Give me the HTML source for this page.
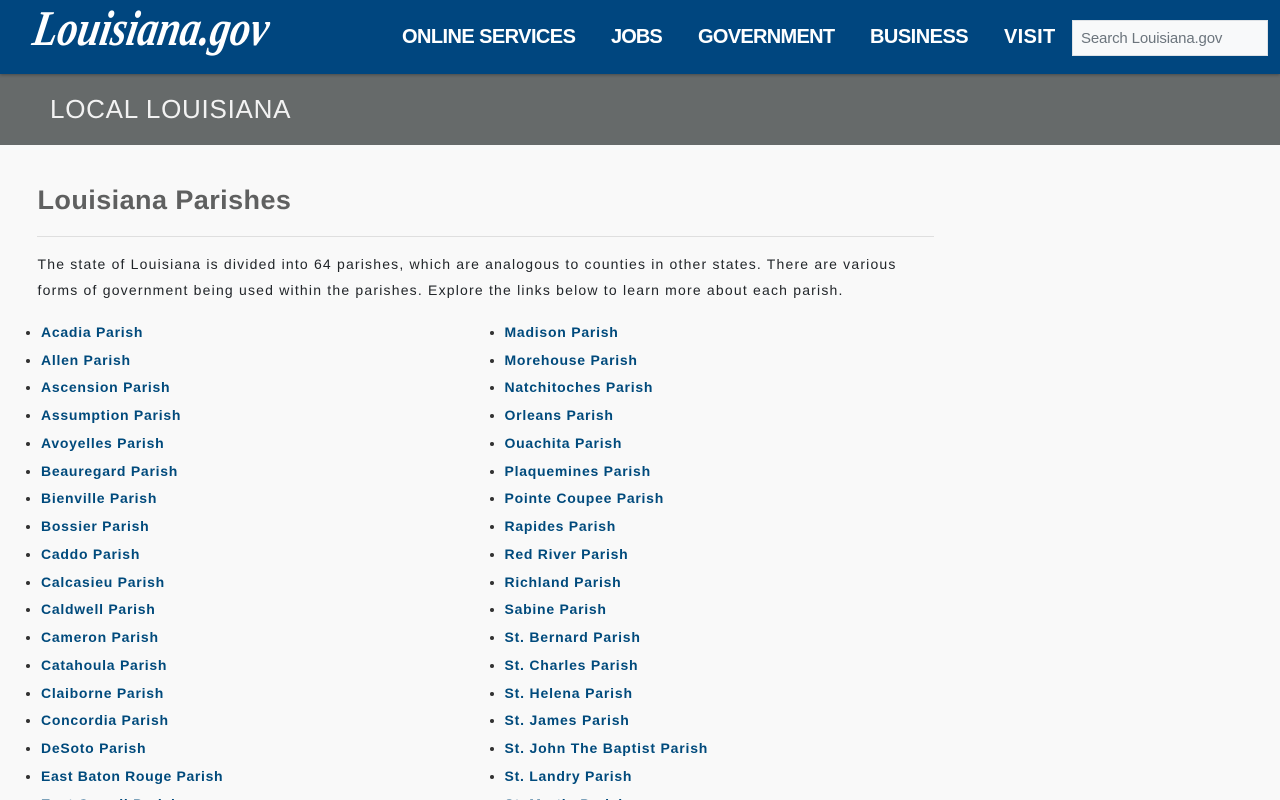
<!DOCTYPE html>
<html lang="en">
<head>
<meta charset="utf-8">
<title>Local Louisiana</title>
<style>
html,body{margin:0;padding:0;width:1280px;height:800px;overflow:hidden;background:#f9f9f9;font-family:"Liberation Sans",Arial,sans-serif}
.page{position:relative;width:1280px;height:800px;overflow:hidden;background:#f9f9f9}
.hdr{position:absolute;left:0;top:0;width:1280px;height:74px;background:#00467f;box-shadow:0 1px 3px rgba(0,0,0,.3);z-index:2}
.logo{position:absolute;left:0;top:0}
.nav{position:absolute;top:25px;line-height:24px;font-size:20px;font-weight:bold;color:#fff;white-space:nowrap}
.search{position:absolute;left:1072px;top:20px;width:196px;height:36px;box-sizing:border-box;background:#f8f9fa;border:1px solid #dee2e6;padding-left:8px;font-size:15px;letter-spacing:-.15px;line-height:36px;color:#6c757d;white-space:nowrap}
.band{position:absolute;left:0;top:74px;width:1280px;height:71px;background:#666a6a}
.band div{position:absolute;left:50px;top:20px;font-size:26px;line-height:30px;color:#f2f2f2;letter-spacing:.73px;white-space:nowrap}
h1{position:absolute;left:37.5px;top:184px;margin:0;font-size:27px;line-height:32px;font-weight:bold;color:#5f6060;letter-spacing:.43px;white-space:nowrap}
hr{position:absolute;left:37px;top:236px;width:897px;height:1px;margin:0;border:0;background:#dfdfdf}
.p{position:absolute;left:37.5px;font-size:14px;line-height:26px;color:#212529;white-space:nowrap}
ul{position:absolute;top:318.8px;margin:0;padding:0;list-style:none}
li{position:relative;height:27.75px;line-height:27.75px;font-size:14px;font-weight:bold;color:#004a7c;letter-spacing:.74px;white-space:nowrap}
li:before{content:"";position:absolute;left:-15px;top:12px;width:4px;height:4px;border-radius:50%;background:#333}
</style>
</head>
<body>
<div class="page">
<div class="hdr">
<svg class="logo" width="300" height="74" viewBox="0 0 300 74"><text transform="translate(31 45) skewX(-10)" x="0" y="0" font-family="Liberation Serif" font-style="italic" font-weight="bold" font-size="50" fill="#fff" textLength="235" lengthAdjust="spacingAndGlyphs">Louisiana.gov</text></svg>
<div class="nav" style="left:402px;letter-spacing:-.57px">ONLINE SERVICES</div>
<div class="nav" style="left:611px;letter-spacing:-.9px">JOBS</div>
<div class="nav" style="left:698px;letter-spacing:-.7px">GOVERNMENT</div>
<div class="nav" style="left:870px;letter-spacing:-.52px">BUSINESS</div>
<div class="nav" style="left:1004px;letter-spacing:.3px">VISIT</div>
<div class="search">Search Louisiana.gov</div>
</div>
<div class="band"><div>LOCAL LOUISIANA</div></div>
<h1>Louisiana Parishes</h1>
<hr>
<div class="p" style="top:251px;letter-spacing:1.182px">The state of Louisiana is divided into 64 parishes, which are analogous to counties in other states. There are various</div>
<div class="p" style="top:277px;letter-spacing:1.195px">forms of government being used within the parishes. Explore the links below to learn more about each parish.</div>
<ul style="left:41px">
<li>Acadia Parish</li><li>Allen Parish</li><li>Ascension Parish</li><li>Assumption Parish</li><li>Avoyelles Parish</li><li>Beauregard Parish</li><li>Bienville Parish</li><li>Bossier Parish</li><li>Caddo Parish</li><li>Calcasieu Parish</li><li>Caldwell Parish</li><li>Cameron Parish</li><li>Catahoula Parish</li><li>Claiborne Parish</li><li>Concordia Parish</li><li>DeSoto Parish</li><li style="letter-spacing:.65px">East Baton Rouge Parish</li><li>East Carroll Parish</li>
</ul>
<ul style="left:504.5px">
<li style="letter-spacing:.76px">Madison Parish</li><li>Morehouse Parish</li><li>Natchitoches Parish</li><li>Orleans Parish</li><li>Ouachita Parish</li><li>Plaquemines Parish</li><li>Pointe Coupee Parish</li><li>Rapides Parish</li><li>Red River Parish</li><li>Richland Parish</li><li>Sabine Parish</li><li style="letter-spacing:.78px">St. Bernard Parish</li><li style="letter-spacing:.78px">St. Charles Parish</li><li style="letter-spacing:.82px">St. Helena Parish</li><li style="letter-spacing:.82px">St. James Parish</li><li style="letter-spacing:.8px">St. John The Baptist Parish</li><li>St. Landry Parish</li><li>St. Martin Parish</li>
</ul>
</div>
</body>
</html>
